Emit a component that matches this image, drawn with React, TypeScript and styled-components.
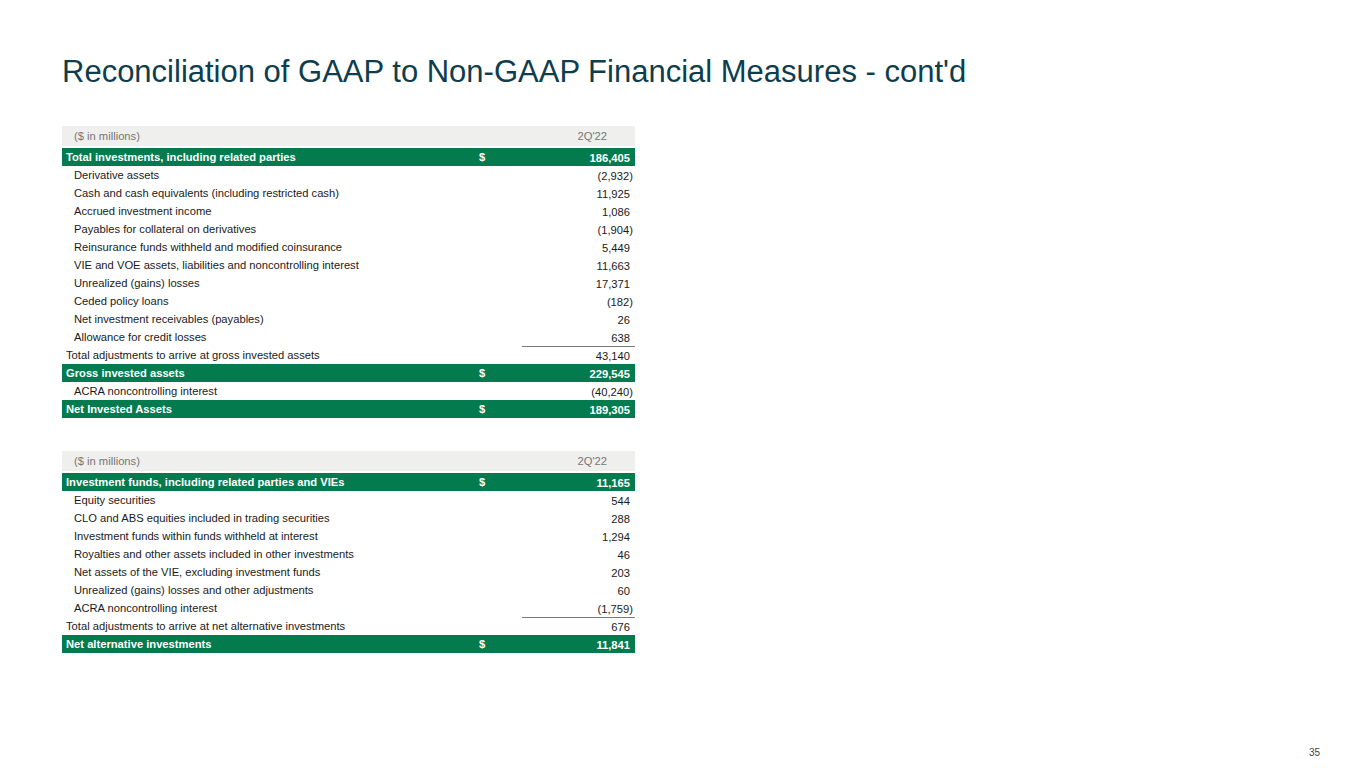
import React from "react";
import styled, { createGlobalStyle } from "styled-components";

const GlobalStyle = createGlobalStyle`
  html, body {
    margin: 0;
    padding: 0;
    background: #ffffff;
  }
  body {
    font-family: "Liberation Sans", Arial, sans-serif;
  }
`;

type Kind = "green" | "sub" | "total";

type Row = {
  label: string;
  value: string;
  kind: Kind;
  ruled?: boolean;
};

const firstTable: Row[] = [
  { label: "Total investments, including related parties", value: "186,405", kind: "green" },
  { label: "Derivative assets", value: "(2,932)", kind: "sub" },
  { label: "Cash and cash equivalents (including restricted cash)", value: "11,925", kind: "sub" },
  { label: "Accrued investment income", value: "1,086", kind: "sub" },
  { label: "Payables for collateral on derivatives", value: "(1,904)", kind: "sub" },
  { label: "Reinsurance funds withheld and modified coinsurance", value: "5,449", kind: "sub" },
  { label: "VIE and VOE assets, liabilities and noncontrolling interest", value: "11,663", kind: "sub" },
  { label: "Unrealized (gains) losses", value: "17,371", kind: "sub" },
  { label: "Ceded policy loans", value: "(182)", kind: "sub" },
  { label: "Net investment receivables (payables)", value: "26", kind: "sub" },
  { label: "Allowance for credit losses", value: "638", kind: "sub" },
  { label: "Total adjustments to arrive at gross invested assets", value: "43,140", kind: "total", ruled: true },
  { label: "Gross invested assets", value: "229,545", kind: "green" },
  { label: "ACRA noncontrolling interest", value: "(40,240)", kind: "sub" },
  { label: "Net Invested Assets", value: "189,305", kind: "green" },
];

const secondTable: Row[] = [
  { label: "Investment funds, including related parties and VIEs", value: "11,165", kind: "green" },
  { label: "Equity securities", value: "544", kind: "sub" },
  { label: "CLO and ABS equities included in trading securities", value: "288", kind: "sub" },
  { label: "Investment funds within funds withheld at interest", value: "1,294", kind: "sub" },
  { label: "Royalties and other assets included in other investments", value: "46", kind: "sub" },
  { label: "Net assets of the VIE, excluding investment funds", value: "203", kind: "sub" },
  { label: "Unrealized (gains) losses and other adjustments", value: "60", kind: "sub" },
  { label: "ACRA noncontrolling interest", value: "(1,759)", kind: "sub" },
  { label: "Total adjustments to arrive at net alternative investments", value: "676", kind: "total", ruled: true },
  { label: "Net alternative investments", value: "11,841", kind: "green" },
];

// negative numbers hang their closing bracket past the column edge
function hangs(value: string) {
  return value.endsWith(")");
}

function RecTable({ rows }: { rows: Row[] }) {
  return (
    <Table>
      <HeaderRow>
        <HeaderLabel>($ in millions)</HeaderLabel>
        <span />
        <HeaderPeriod>2Q'22</HeaderPeriod>
      </HeaderRow>
      {rows.map((row) => (
        <DataRow key={row.label} $kind={row.kind}>
          <Label $kind={row.kind}>{row.label}</Label>
          <Dollar>{row.kind === "green" ? "$" : ""}</Dollar>
          <Value $ruled={row.ruled} $hang={hangs(row.value)}>
            {row.value}
          </Value>
        </DataRow>
      ))}
    </Table>
  );
}

export default function App() {
  return (
    <Slide>
      <GlobalStyle />
      <Title>Reconciliation of GAAP to Non-GAAP Financial Measures - cont'd</Title>
      <Tables>
        <RecTable rows={firstTable} />
        <RecTable rows={secondTable} />
      </Tables>
      <PageNumber>35</PageNumber>
    </Slide>
  );
}

const Slide = styled.div`
  position: relative;
  width: 1365px;
  height: 768px;
  overflow: hidden;
  background: #ffffff;
  padding: 53px 0 0 62px;
  box-sizing: border-box;
`;

const Title = styled.h1`
  margin: 0;
  font-family: "Liberation Sans", Arial, sans-serif;
  font-weight: 400;
  font-size: 31px;
  line-height: 38px;
  color: #0e3d4d;
`;

const Tables = styled.div`
  display: flex;
  flex-direction: column;
  gap: 33px;
  margin-top: 35px;
  width: 573px;
`;

const Table = styled.div`
  display: flex;
  flex-direction: column;
  font-size: 11.2px;
  color: #1a1a1a;
`;

const HeaderRow = styled.div`
  display: grid;
  grid-template-columns: 1fr 60px 113px;
  align-items: center;
  height: 20px;
  margin-bottom: 2px;
  background: #efefee;
  color: #767676;
`;

const HeaderLabel = styled.span`
  padding-left: 12px;
`;

const HeaderPeriod = styled.span`
  text-align: right;
  padding-right: 28px;
`;

const DataRow = styled.div<{ $kind: Kind }>`
  display: grid;
  grid-template-columns: 1fr 60px 113px;
  height: 18px;
  background: ${(p) => (p.$kind === "green" ? "#047a4f" : "transparent")};
  color: ${(p) => (p.$kind === "green" ? "#ffffff" : "#1a1a1a")};
  font-weight: ${(p) => (p.$kind === "green" ? 700 : 400)};
`;

const Label = styled.span<{ $kind: Kind }>`
  display: flex;
  align-items: center;
  padding-left: ${(p) => (p.$kind === "sub" ? "12px" : "4px")};
  white-space: nowrap;
`;

const Dollar = styled.span`
  display: flex;
  align-items: center;
  padding-left: 17px;
`;

const Value = styled.span<{ $ruled?: boolean; $hang: boolean }>`
  display: flex;
  align-items: center;
  justify-content: flex-end;
  padding-right: ${(p) => (p.$hang ? "2px" : "5px")};
  border-top: ${(p) => (p.$ruled ? "1px solid #7a7a7a" : "1px solid transparent")};
  box-sizing: border-box;
`;

const PageNumber = styled.div`
  position: absolute;
  right: 45px;
  bottom: 10px;
  font-size: 10px;
  color: #444444;
`;
